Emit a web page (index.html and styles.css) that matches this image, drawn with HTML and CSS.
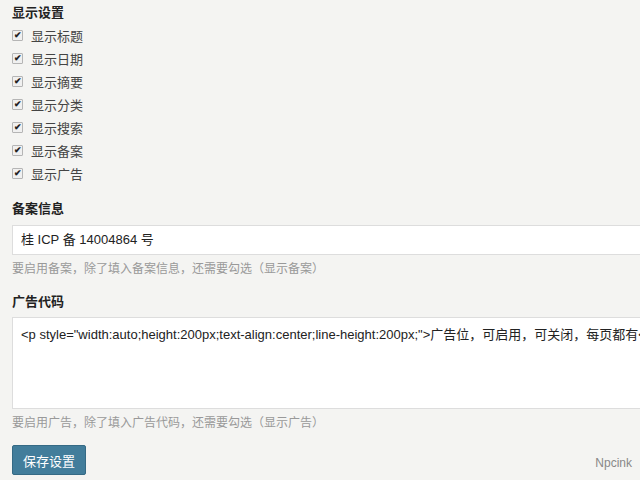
FILE: index.html
```html
<!DOCTYPE html>
<html>
<head>
<meta charset="utf-8">
<link rel="stylesheet" href="styles.css">
</head>
<body>
<div class="page">
  <section class="group">
    <h3 class="title">显示设置</h3>
    <ul class="checks">
      <li><span class="box">✔</span><span>显示标题</span></li>
      <li><span class="box">✔</span><span>显示日期</span></li>
      <li><span class="box">✔</span><span>显示摘要</span></li>
      <li><span class="box">✔</span><span>显示分类</span></li>
      <li><span class="box">✔</span><span>显示搜索</span></li>
      <li><span class="box">✔</span><span>显示备案</span></li>
      <li><span class="box">✔</span><span>显示广告</span></li>
    </ul>
  </section>
  <section class="group">
    <h3 class="title">备案信息</h3>
    <div class="input">桂 ICP 备 14004864 号</div>
    <p class="help">要启用备案，除了填入备案信息，还需要勾选（显示备案）</p>
  </section>
  <section class="group">
    <h3 class="title">广告代码</h3>
    <div class="textarea">&lt;p style="width:auto;height:200px;text-align:center;line-height:200px;"&gt;广告位，可启用，可关闭，每页都有&lt;/p&gt;</div>
    <p class="help">要启用广告，除了填入广告代码，还需要勾选（显示广告）</p>
  </section>
  <div class="footer">
    <button class="save">保存设置</button>
    <span class="brand">Npcink</span>
  </div>
</div>
</body>
</html>
```

FILE: styles.css
```css
html, body {
  margin: 0;
  padding: 0;
  background: #f4f4f2;
  overflow: hidden;
}
body {
  font-family: "Liberation Sans", "Noto Sans CJK SC", sans-serif;
  font-size: 13px;
  color: #333;
}
.page {
  width: 720px;
  padding: 4px 0 0 12px;
}
.title {
  margin: 0;
  font-size: 13px;
  font-weight: bold;
  line-height: 18px;
  color: #222;
}
.checks {
  list-style: none;
  margin: 2px 0 0;
  padding: 0;
}
.checks li {
  display: flex;
  align-items: center;
  height: 23px;
  color: #444;
}
.box {
  width: 9px;
  height: 9px;
  border: 1px solid #b5b5b5;
  background: #f0f0f0;
  border-radius: 1px;
  margin-right: 8px;
  font-size: 9px;
  line-height: 9px;
  font-weight: bold;
  text-align: center;
  color: #222;
  display: flex;
  align-items: center;
  justify-content: center;
}
.group + .group {
  margin-top: 15px;
}
.input {
  margin-top: 7px;
  height: 28px;
  line-height: 28px;
  padding: 0 8px;
  background: #fff;
  border: 1px solid #ddd;
  color: #222;
}
.textarea {
  margin-top: 6px;
  height: 84px;
  padding: 6px 8px 0;
  background: #fff;
  border: 1px solid #ddd;
  white-space: nowrap;
  overflow: hidden;
  color: #222;
}
.help {
  margin: 6px 0 0;
  font-size: 12px;
  line-height: 17px;
  color: #999;
}
.footer {
  margin-top: 13px;
  width: 620px;
  display: flex;
  justify-content: space-between;
  align-items: flex-end;
}
.save {
  width: 74px;
  height: 30px;
  border: 1px solid #356a85;
  border-radius: 2px;
  background: #427d9b;
  color: #fff;
  font-family: "Noto Sans CJK SC", sans-serif;
  font-size: 13px;
  padding: 0;
}
.brand {
  color: #888;
  font-size: 12px;
  margin-bottom: 5px;
}
```
